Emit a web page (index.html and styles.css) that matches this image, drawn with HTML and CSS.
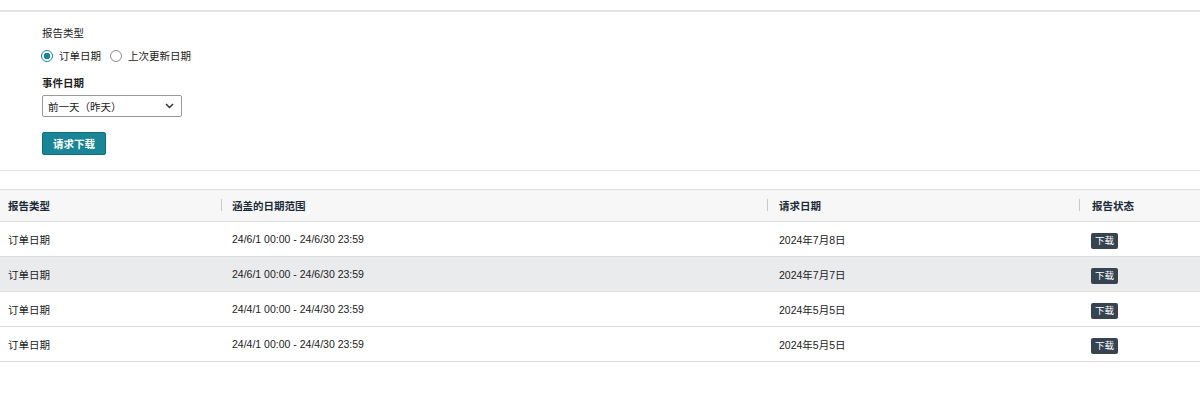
FILE: index.html
```html
<html lang="zh">
<head>
    <meta charset="utf-8" />
    <title>报告下载</title>
    <link rel="stylesheet" href="styles.css">
</head>
<body>
<div class="regle"></div>

<form class="demande">
    <div class="libelle">报告类型</div>
    <div class="radios">
        <label class="radio"><span class="rond coche"></span>订单日期</label>
        <label class="radio"><span class="rond"></span>上次更新日期</label>
    </div>

    <div class="libelle gras">事件日期</div>
    <div class="choix">
        <span>前一天（昨天）</span>
        <svg width="9" height="6" viewBox="0 0 9 6"><path d="M1 1 L4.5 4.5 L8 1" fill="none" stroke="#333" stroke-width="1.5"/></svg>
    </div>

    <button type="button" class="bouton">请求下载</button>
</form>

<div class="regle bas"></div>

<table class="rapports">
    <thead>
        <tr>
            <th class="c1">报告类型</th>
            <th class="c2"><span class="sep"></span>涵盖的日期范围</th>
            <th class="c3"><span class="sep"></span>请求日期</th>
            <th class="c4"><span class="sep"></span>报告状态</th>
        </tr>
    </thead>
    <tbody>
        <tr>
            <td>订单日期</td>
            <td>24/6/1 00:00 - 24/6/30 23:59</td>
            <td>2024年7月8日</td>
            <td><span class="badge">下载</span></td>
        </tr>
        <tr class="survol">
            <td>订单日期</td>
            <td>24/6/1 00:00 - 24/6/30 23:59</td>
            <td>2024年7月7日</td>
            <td><span class="badge">下载</span></td>
        </tr>
        <tr>
            <td>订单日期</td>
            <td>24/4/1 00:00 - 24/4/30 23:59</td>
            <td>2024年5月5日</td>
            <td><span class="badge">下载</span></td>
        </tr>
        <tr>
            <td>订单日期</td>
            <td>24/4/1 00:00 - 24/4/30 23:59</td>
            <td>2024年5月5日</td>
            <td><span class="badge">下载</span></td>
        </tr>
    </tbody>
</table>
</body>
</html>
```

FILE: styles.css
```css
body {
    margin: 0;
    font-family: "Liberation Sans", "Noto Sans CJK SC", sans-serif;
    font-size: 10.5px;
    color: #111;
    background: white;
}

div.regle {
    margin-top: 10px;
    border-top: 2px solid #e4e4e4;
}

div.regle.bas {
    margin-top: 15px;
    border-top-width: 1px;
}

form.demande {
    padding: 14px 42px 0 42px;
}

div.libelle {
    line-height: 14px;
    color: #222;
}

div.libelle.gras {
    font-weight: bold;
    margin-top: 13px;
}

div.radios {
    display: flex;
    gap: 9px;
    margin-top: 9px;
    line-height: 14px;
    color: #222;
}

label.radio {
    display: flex;
    align-items: center;
    gap: 6px;
}

label.radio:first-child {
    margin-left: -1px;
}

span.rond {
    width: 10px;
    height: 10px;
    border: 1px solid #8a8a8a;
    border-radius: 50%;
    box-sizing: content-box;
}

span.rond.coche {
    border-color: #1a8596;
    background: radial-gradient(circle, #1a8596 0 3px, white 3.6px);
}

div.choix {
    margin-top: 5px;
    border: 1px solid #9a9a9a;
    border-radius: 2px;
    display: flex;
    align-items: center;
    justify-content: space-between;
    padding: 0 7px 0 5px;
    box-sizing: border-box;
    width: 140px;
    height: 22px;
    color: #222;
}

button.bouton {
    margin-top: 15px;
    height: 23px;
    width: 64px;
    padding: 0;
    border: 1px solid #0f6f7c;
    border-radius: 2px;
    background: #1a8596;
    color: white;
    font: inherit;
    font-weight: bold;
}

table.rapports {
    width: 100%;
    border-collapse: collapse;
    margin-top: 18px;
    font: inherit;
    color: #222;
}

table.rapports th,
table.rapports td {
    text-align: left;
    padding: 0 0 0 8px;
    height: 35px;
    box-sizing: border-box;
    border-bottom: 1px solid #dcdcdc;
    vertical-align: middle;
}

table.rapports thead tr {
    background: #f7f7f7;
    border-top: 1px solid #dcdcdc;
}

table.rapports th {
    height: 32px;
    font-weight: bold;
    color: #1c2b3a;
    position: relative;
}

table.rapports th.c1 { width: 221px; }
table.rapports th.c2 { width: 546px; padding-left: 11px; }
table.rapports th.c3 { width: 312px; padding-left: 12px; }
table.rapports th.c4 { padding-left: 13px; }

table.rapports td:nth-child(2) { padding-left: 11px; }
table.rapports td:nth-child(3) { padding-left: 12px; }
table.rapports td:nth-child(4) { padding-left: 12px; }

th span.sep {
    position: absolute;
    left: 0;
    top: 9px;
    height: 12px;
    border-left: 1px solid #c8c8c8;
}

tr.survol {
    background: #eaebed;
}

span.badge {
    display: inline-block;
    background: #374351;
    color: white;
    font-size: 9.5px;
    line-height: 16px;
    padding: 0 4px;
    border-radius: 2px;
    margin-top: 3px;
}
```
